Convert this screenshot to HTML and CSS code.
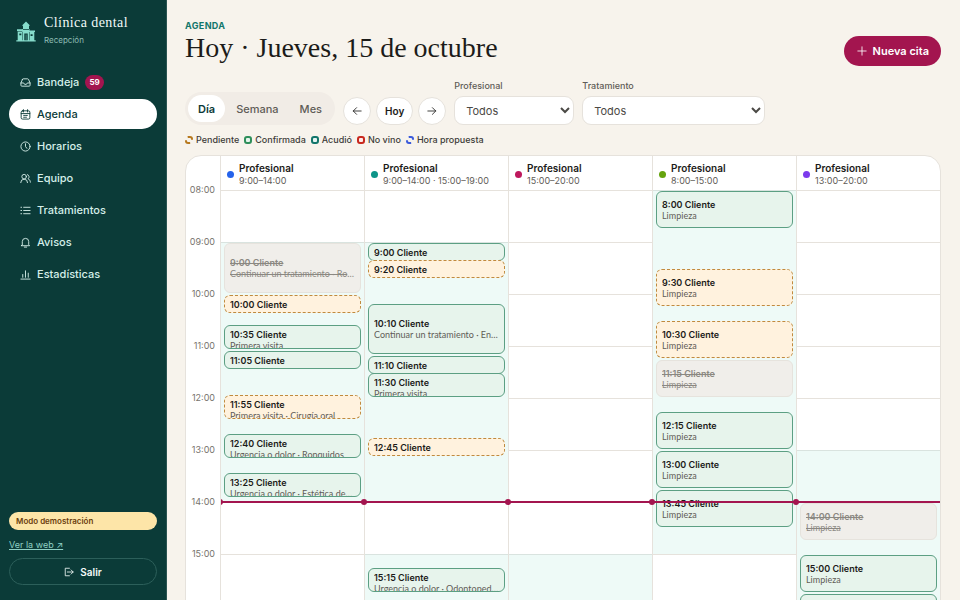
FILE: index.html
```html
<!DOCTYPE html>
<html lang="es">
<head>
<meta charset="utf-8">
<meta name="viewport" content="width=device-width, initial-scale=1">
<title>Agenda · Clínica dental</title>
<link rel="stylesheet" href="styles.css">
</head>
<body>
<div class="app">
  <aside class="sidebar">
    <div class="brand">
      <svg class="brand-logo" viewBox="0 0 20 21" aria-hidden="true">
        <path fill="#86dccb" d="M10 .5 13.500 4v1H13v3h.5v1.500H19V11h-.7v8.200h1.400v1.300H.3v-1.300h1.400V10H1V8.300h5.500V8H7V5h-.5V4z"/>
        <path fill="#0b3b38" d="M8.300 12.500h3.400v6.700H8.300zM3.300 12.500h2v1.800h-2zM14.600 13.200h2V15h-2zM7 8h6v.7H7zM1.700 10.200h4.600v.6H1.700zM6.300 11h.5v8.200h-.5zM13.300 11h.5v8.200h-.5z"/>
        <path fill="#86dccb" d="M9.800 13.500h.5v5.700h-.5z"/>
      </svg>
      <div class="brand-text">
        <span class="brand-name">Clínica dental</span>
        <span class="brand-role">Recepción</span>
      </div>
    </div>
    <nav class="nav" aria-label="Principal">
      <a class="nav-link" href="#bandeja"><svg class="icon" viewBox="0 0 24 24"><path d="M22 13h-6l-2 3h-4l-2-3H2"/><path d="M5.500 5 2 13v5a2 2 0 0 0 2 2h16a2 2 0 0 0 2-2v-5l-3.500-8a2 2 0 0 0-1.800-1H7.300a2 2 0 0 0-1.800 1z"/></svg>Bandeja<span class="badge">59</span></a>
      <a class="nav-link is-active" href="#agenda" aria-current="page"><svg class="icon" viewBox="0 0 24 24"><rect x="2.500" y="4" width="19" height="18" rx="3"/><path d="M7.500 1.500v5M16.500 1.500v5M2.500 10h19M8 14h2M12 14h4M8 18h2M12 18h2"/></svg>Agenda</a>
      <a class="nav-link" href="#horarios"><svg class="icon" viewBox="0 0 24 24"><circle cx="12" cy="12" r="10"/><path d="M12 6v6l3 4"/></svg>Horarios</a>
      <a class="nav-link" href="#equipo"><svg class="icon" viewBox="0 0 24 24"><circle cx="9" cy="8" r="5"/><path d="M1.500 21a7.500 7.500 0 0 1 15 0M16 3.500a5 5 0 0 1 1.500 9c3 1.200 5 4 5.200 7.500"/></svg>Equipo</a>
      <a class="nav-link" href="#tratamientos"><svg class="icon" viewBox="0 0 24 24"><path d="M8 5h14M8 12h14M8 19h14M2 5h1.500M2 12h1.500M2 19h1.500"/></svg>Tratamientos</a>
      <a class="nav-link" href="#avisos"><svg class="icon" viewBox="0 0 24 24"><path d="M5 17V10a7 7 0 0 1 14 0v7l2 2H3zM9.500 22h5"/></svg>Avisos</a>
      <a class="nav-link" href="#estadisticas"><svg class="icon" viewBox="0 0 24 24"><path d="M2 22h20M6 18v-6M12 18V4M18 18V9"/></svg>Estadísticas</a>
    </nav>
    <div class="sidebar-foot">
      <span class="demo-tag">Modo demostración</span>
      <a class="web-link" href="#web">Ver la web ↗</a>
      <button class="logout" type="button"><svg class="icon icon-small" viewBox="0 0 24 24"><path d="M13 3H3v18h10M8 12h14M17 7l5 5-5 5"/></svg>Salir</button>
    </div>
  </aside>

  <main class="main">
    <header class="page-head">
      <div>
        <p class="eyebrow">Agenda</p>
        <h1 class="title">Hoy · Jueves, 15 de octubre</h1>
      </div>
      <button class="primary" type="button"><svg class="icon icon-small" viewBox="0 0 24 24"><path d="M12 2v20M2 12h20"/></svg>Nueva cita</button>
    </header>

    <div class="toolbar">
      <div class="segmented">
        <button class="segment is-on" type="button">Día</button>
        <button class="segment" type="button">Semana</button>
        <button class="segment" type="button">Mes</button>
      </div>
      <div class="stepper">
        <button class="step" type="button" aria-label="Día anterior"><svg class="icon icon-small" viewBox="0 0 24 24"><path d="M22 12H3M11 4l-8 8 8 8"/></svg></button>
        <button class="step" type="button">Hoy</button>
        <button class="step" type="button" aria-label="Día siguiente"><svg class="icon icon-small" viewBox="0 0 24 24"><path d="M2 12h19M13 4l8 8-8 8"/></svg></button>
      </div>
      <div class="field">
        <label for="pro">Profesional</label>
        <select id="pro" class="select"><option>Todos</option></select>
      </div>
      <div class="field field-wide">
        <label for="treat">Tratamiento</label>
        <select id="treat" class="select"><option>Todos</option></select>
      </div>
    </div>

    <ul class="legend">
      <li><i class="key key-pending"></i>Pendiente</li>
      <li><i class="key key-confirmed"></i>Confirmada</li>
      <li><i class="key key-attended"></i>Acudió</li>
      <li><i class="key key-missed"></i>No vino</li>
      <li><i class="key key-proposed"></i>Hora propuesta</li>
    </ul>

    <section class="calendar" aria-label="Agenda del día">
      <div class="gutter">
        <span>08:00</span><span>09:00</span><span>10:00</span><span>11:00</span><span>12:00</span><span>13:00</span><span>14:00</span><span>15:00</span>
      </div>

      <div class="column">
        <div class="column-head"><i class="dot dot-blue"></i><div><strong>Profesional</strong><span>9:00–14:00</span></div></div>
        <div class="slots">
          <div class="open" style="grid-row: 13 / span 60"></div>
          <article class="event cancelled" style="grid-row: 13 / span 12"><b>9:00 Cliente</b><span>Continuar un tratamiento · Rotura</span></article>
          <article class="event pending" style="grid-row: 25 / span 4"><b>10:00 Cliente</b></article>
          <article class="event confirmed" style="grid-row: 32 / span 6"><b>10:35 Cliente</b><span>Primera visita</span></article>
          <article class="event confirmed" style="grid-row: 38 / span 4"><b>11:05 Cliente</b></article>
          <article class="event pending" style="grid-row: 48 / span 6"><b>11:55 Cliente</b><span>Primera visita · Cirugía oral</span></article>
          <article class="event confirmed" style="grid-row: 57 / span 6"><b>12:40 Cliente</b><span>Urgencia o dolor · Ronquidos</span></article>
          <article class="event confirmed" style="grid-row: 66 / span 6"><b>13:25 Cliente</b><span>Urgencia o dolor · Estética dental</span></article>
          <div class="now" style="grid-row: 73"></div>
        </div>
      </div>

      <div class="column">
        <div class="column-head"><i class="dot dot-teal"></i><div><strong>Profesional</strong><span>9:00–14:00 · 15:00–19:00</span></div></div>
        <div class="slots">
          <div class="open" style="grid-row: 13 / span 60"></div>
          <div class="open" style="grid-row: 85 / span 48"></div>
          <article class="event confirmed" style="grid-row: 13 / span 4"><b>9:00 Cliente</b></article>
          <article class="event pending" style="grid-row: 17 / span 4"><b>9:20 Cliente</b></article>
          <article class="event confirmed" style="grid-row: 27 / span 12"><b>10:10 Cliente</b><span>Continuar un tratamiento · Endodoncia</span></article>
          <article class="event confirmed" style="grid-row: 39 / span 4"><b>11:10 Cliente</b></article>
          <article class="event confirmed" style="grid-row: 43 / span 6"><b>11:30 Cliente</b><span>Primera visita</span></article>
          <article class="event pending" style="grid-row: 58 / span 4"><b>12:45 Cliente</b></article>
          <article class="event confirmed" style="grid-row: 88 / span 6"><b>15:15 Cliente</b><span>Urgencia o dolor · Odontopediatría</span></article>
          <div class="now" style="grid-row: 73"></div>
        </div>
      </div>

      <div class="column">
        <div class="column-head"><i class="dot dot-pink"></i><div><strong>Profesional</strong><span>15:00–20:00</span></div></div>
        <div class="slots">
          <div class="open" style="grid-row: 85 / span 60"></div>
          <div class="now" style="grid-row: 73"></div>
        </div>
      </div>

      <div class="column">
        <div class="column-head"><i class="dot dot-green"></i><div><strong>Profesional</strong><span>8:00–15:00</span></div></div>
        <div class="slots">
          <div class="open" style="grid-row: 1 / span 84"></div>
          <article class="event confirmed" style="grid-row: 1 / span 9"><b>8:00 Cliente</b><span>Limpieza</span></article>
          <article class="event pending" style="grid-row: 19 / span 9"><b>9:30 Cliente</b><span>Limpieza</span></article>
          <article class="event pending" style="grid-row: 31 / span 9"><b>10:30 Cliente</b><span>Limpieza</span></article>
          <article class="event cancelled" style="grid-row: 40 / span 9"><b>11:15 Cliente</b><span>Limpieza</span></article>
          <article class="event confirmed" style="grid-row: 52 / span 9"><b>12:15 Cliente</b><span>Limpieza</span></article>
          <article class="event confirmed" style="grid-row: 61 / span 9"><b>13:00 Cliente</b><span>Limpieza</span></article>
          <article class="event confirmed" style="grid-row: 70 / span 9"><b>13:45 Cliente</b><span>Limpieza</span></article>
          <div class="now" style="grid-row: 73"></div>
        </div>
      </div>

      <div class="column">
        <div class="column-head"><i class="dot dot-violet"></i><div><strong>Profesional</strong><span>13:00–20:00</span></div></div>
        <div class="slots">
          <div class="open" style="grid-row: 61 / span 84"></div>
          <article class="event cancelled" style="grid-row: 73 / span 9"><b>14:00 Cliente</b><span>Limpieza</span></article>
          <article class="event confirmed" style="grid-row: 85 / span 9"><b>15:00 Cliente</b><span>Limpieza</span></article>
          <article class="event confirmed" style="grid-row: 94 / span 9"></article>
          <div class="now" style="grid-row: 73"></div>
        </div>
      </div>
    </section>
  </main>
</div>
</body>
</html>
```
FILE: styles.css
```css
:root {
  --hour: 52px;
  --deep: #0b3b38;
  --ink: #1c1b19;
  --muted: #5f5c57;
  --line: #e6e2dc;
  --berry: #a3154f;
  --paper: #f7f3ec;
}

* { box-sizing: border-box; }

body {
  margin: 0;
  background: var(--paper);
  color: var(--ink);
  font-family: Inter, "Liberation Sans", sans-serif;
  font-size: 11px;
  line-height: 14px;
}

button, select { font: inherit; color: inherit; }
button { cursor: pointer; }

.icon {
  flex: none;
  width: 11px;
  height: 11px;
  fill: none;
  stroke: currentColor;
  stroke-width: 2;
  stroke-linecap: round;
  stroke-linejoin: round;
}
.icon-small { width: 10px; height: 10px; }

.app { display: flex; height: 100vh; }

/* Sidebar */
.sidebar {
  display: flex;
  flex-direction: column;
  flex: none;
  width: 167px;
  padding: 15px 9px;
  background: var(--deep);
  border-right: 1px solid #2b5552;
  color: #d5efe9;
}
.brand { display: flex; align-items: center; gap: 8px; padding: 0 7px; }
.brand-logo { width: 20px; height: 21px; margin-top: 2px; }
.brand-text { display: flex; flex-direction: column; gap: 3px; }
.brand-name {
  font: 14px/16px "Liberation Serif", serif;
  letter-spacing: 0.03em;
  color: #f2faf8;
}
.brand-role { font-size: 8px; line-height: 12px; color: #8fbdb5; }
.nav { display: flex; flex-direction: column; gap: 2px; margin-top: 21px; }
.nav-link {
  display: flex;
  align-items: center;
  gap: 6px;
  height: 30px;
  padding: 0 11px;
  border-radius: 15px;
  color: inherit;
  font-weight: 500;
  text-decoration: none;
}
.nav-link.is-active { background: #fff; color: var(--deep); }
.badge {
  padding: 0 4px;
  border-radius: 8px;
  background: var(--berry);
  color: #fff;
  font-size: 8px;
  font-weight: 700;
  line-height: 15px;
}
.sidebar-foot { display: flex; flex-direction: column; margin-top: auto; }
.demo-tag {
  padding: 0 7px;
  border-radius: 9px;
  background: #fde5a8;
  color: #6b3d0c;
  font-size: 8px;
  font-weight: 600;
  line-height: 18px;
}
.web-link {
  align-self: flex-start;
  margin: 8px 0 6px;
  color: #8fd0c4;
  font-size: 9px;
}
.logout {
  display: flex;
  align-items: center;
  justify-content: center;
  gap: 6px;
  height: 27px;
  border: 1px solid #2c5f5a;
  border-radius: 14px;
  background: transparent;
  color: #f2faf8;
  font-size: 10px;
  font-weight: 600;
}

/* Page head */
.main {
  flex: 1;
  min-width: 0;
  padding: 20px 19px 20px 18px;
  overflow-y: auto;
  scrollbar-width: none;
}
.page-head { display: flex; justify-content: space-between; align-items: flex-start; }
.eyebrow {
  margin: 0;
  color: #12766b;
  font-size: 9px;
  font-weight: 700;
  letter-spacing: 0.04em;
  line-height: 12px;
  text-transform: uppercase;
}
.title { margin: 0; font: 28px/32px "Liberation Serif", serif; }
.primary {
  display: flex;
  align-items: center;
  gap: 6px;
  height: 30px;
  margin-top: 16px;
  padding: 0 12px 0 13px;
  border: 0;
  border-radius: 15px;
  background: var(--berry);
  color: #fff;
  font-weight: 600;
}

/* Toolbar */
.toolbar { display: flex; align-items: flex-end; gap: 8px; margin-top: 14px; }
.segmented { display: flex; gap: 1px; padding: 3px; border-radius: 17px; background: #f1ece6; }
.segment {
  height: 27px;
  padding: 0 10px;
  border: 0;
  border-radius: 14px;
  background: transparent;
  color: var(--muted);
  font-weight: 500;
}
.segment.is-on { background: #fff; color: var(--deep); font-weight: 600; }
.stepper { display: flex; gap: 5px; }
.step {
  display: flex;
  align-items: center;
  justify-content: center;
  min-width: 28px;
  height: 28px;
  padding: 0 8px;
  border: 1px solid var(--line);
  border-radius: 14px;
  background: #fff;
  font-size: 10px;
  font-weight: 600;
}
.field { display: flex; flex-direction: column; gap: 4px; width: 120px; }
.field-wide { width: 183px; }
.field label { color: var(--muted); font-size: 9px; font-weight: 500; line-height: 12px; }
.select {
  width: 100%;
  height: 29px;
  padding: 0 0 0 7px;
  border: 1px solid var(--line);
  border-radius: 9px;
  background: #fff;
  color: #4b4945;
}

/* Legend */
.legend {
  display: flex;
  gap: 5px;
  margin: 9px 0;
  padding: 0;
  list-style: none;
  color: #3d3b38;
  font-size: 9px;
  font-weight: 500;
  line-height: 12px;
}
.legend li { display: flex; align-items: center; gap: 3px; }
.key { width: 8px; height: 8px; border: 1px solid; border-width: 2px; border-radius: 3px; }
.key-pending { border-style: dashed; border-color: #b7791f; }
.key-confirmed { border-color: #2f8f5b; background: #e6f4ec; }
.key-attended { border-color: #12766b; background: #e6f4f2; }
.key-missed { border-color: #c8281e; background: #fdecea; }
.key-proposed { border-style: dashed; border-color: #3b5bdb; }

/* Calendar */
.calendar {
  display: grid;
  grid-template-columns: 34px repeat(5, minmax(0, 1fr));
  border: 1px solid var(--line);
  border-radius: 16px;
  background: #fff;
  overflow: hidden;
}
.gutter {
  display: grid;
  grid-auto-rows: var(--hour);
  align-content: start;
  padding: 28px 5px 0 0;
  color: #77736d;
  font-size: 9px;
  line-height: 12px;
  text-align: right;
}
.column { min-width: 0; border-left: 1px solid var(--line); }
.gutter + .column { overflow-x: clip; }
.column-head {
  display: flex;
  align-items: center;
  gap: 5px;
  height: 34px;
  padding: 2px 6px 0;
}
.column-head strong { display: block; font-size: 10px; font-weight: 600; line-height: 13px; }
.column-head span { display: block; color: var(--muted); font-size: 9px; line-height: 11px; white-space: nowrap; }
.dot { flex: none; width: 7px; height: 7px; border-radius: 50%; }
.dot-blue { background: #2563eb; }
.dot-teal { background: #0d9488; }
.dot-pink { background: #be185d; }
.dot-green { background: #65a30d; }
.dot-violet { background: #7c3aed; }

.slots {
  display: grid;
  grid-template-columns: minmax(0, 1fr);
  grid-template-rows: repeat(144, minmax(0, 1fr));
  height: calc(12 * var(--hour));
  background: repeating-linear-gradient(var(--line) 0 1px, transparent 1px var(--hour));
}
.slots > * { grid-column: 1; }
.open { border-top: 1px solid #d9e3df; background: #eefaf7; }

.event {
  display: flex;
  flex-direction: column;
  justify-content: safe center;
  min-width: 0;
  min-height: 18px;
  margin: 1px 3px;
  padding: 3px 5px;
  border: 1px solid;
  border-radius: 6px;
  overflow: hidden;
  font-size: 9px;
  line-height: 11px;
}
.event b, .event span {
  flex: none;
  overflow: hidden;
  text-overflow: ellipsis;
  white-space: nowrap;
}
.event b { font-weight: 600; }
.event span { color: var(--muted); font-family: Lato, sans-serif; }
.confirmed { border-color: #5c9f83; background: #e7f4ec; }
.pending { border-color: #c08a3e; border-style: dashed; background: #fff2de; }
.cancelled {
  border-color: #e6e3dd;
  background: #f0eeea;
  color: #8b8882;
  text-decoration: line-through;
}
.cancelled span { color: #8b8882; }

.now {
  position: relative;
  top: -1px;
  height: 2px;
  background: var(--berry);
  z-index: 1;
}
.now::before {
  content: "";
  position: absolute;
  top: -2px;
  left: -4px;
  width: 6px;
  height: 6px;
  border-radius: 50%;
  background: var(--berry);
}
```
